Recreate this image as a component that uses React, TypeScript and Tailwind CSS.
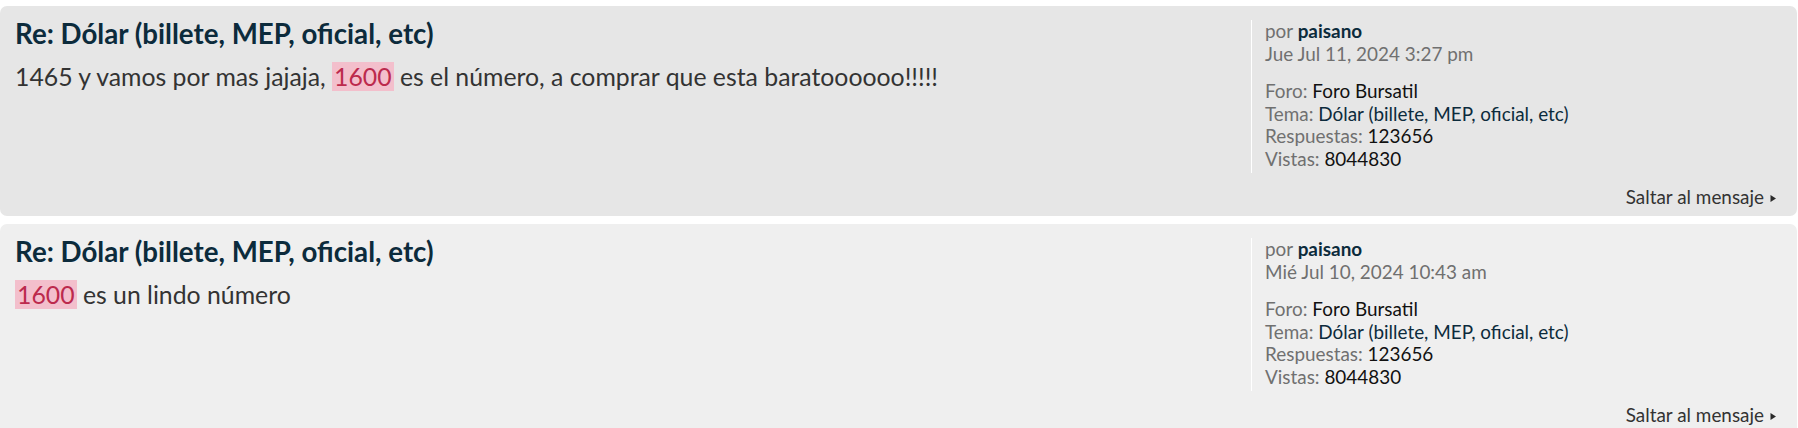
import React from "react";

type PostProps = {
  bg: string;
  date: string;
  body: React.ReactNode;
};

function Arrow() {
  return (
    <svg width="7" height="9" viewBox="0 0 7 9" className="ml-[6px] mt-[2px]" aria-hidden="true">
      <path d="M0.5 1 L6 4.5 L0.5 8 Z" fill="#2a2a2a" />
    </svg>
  );
}

function Post({ bg, date, body }: PostProps) {
  return (
    <div className={`rounded-[7px] ${bg} pl-[15px] pr-[20px] pt-[11px] pb-[8px]`}>
      <div className="flex">
        <div className="flex-1 min-w-0">
          <h3 className="text-[27.7px] leading-[34px] font-bold text-[#0c2b3c]">
            Re: Dólar (billete, MEP, oficial, etc)
          </h3>
          <div className="mt-[11px] text-[24.8px] leading-[30px] text-[#333333]">{body}</div>
        </div>
        <div className="w-[526px] mt-[3px] border-l border-white pl-[13px] text-[18.9px] leading-[22.5px] text-[#707070] pb-[3px]">
          <div>
            por <span className="font-bold text-[#0c2b3c]">paisano</span>
          </div>
          <div>{date}</div>
          <div className="mt-[15px]">
            Foro: <span className="text-[#111111]">Foro Bursatil</span>
          </div>
          <div>
            Tema: <span className="text-[#0c2b3c]">Dólar (billete, MEP, oficial, etc)</span>
          </div>
          <div>
            Respuestas: <span className="text-[#111111]">123656</span>
          </div>
          <div>
            Vistas: <span className="text-[#111111]">8044830</span>
          </div>
        </div>
      </div>
      <div className="flex justify-end items-center mt-[13px] text-[18.9px] leading-[22px] text-[#333333]">
        <span>Saltar al mensaje</span>
        <Arrow />
      </div>
    </div>
  );
}

function Hl({ children }: { children: React.ReactNode }) {
  return <span className="bg-[#f3bfcc] text-[#bc2a4d] px-[2px]">{children}</span>;
}

export default function App() {
  return (
    <div
      className="w-[1798px] h-[428px] overflow-hidden bg-white pt-[6px] pr-[1px] flex flex-col gap-[8px]"
      style={{ fontFamily: "Lato, 'Liberation Sans', sans-serif" }}
    >
      <Post
        bg="bg-[#e6e6e6]"
        date="Jue Jul 11, 2024 3:27 pm"
        body={
          <>
            1465 y vamos por mas jajaja, <Hl>1600</Hl> es el número, a comprar que esta baratoooooo!!!!!
          </>
        }
      />
      <Post
        bg="bg-[#efefef]"
        date="Mié Jul 10, 2024 10:43 am"
        body={
          <>
            <Hl>1600</Hl> es un lindo número
          </>
        }
      />
    </div>
  );
}
